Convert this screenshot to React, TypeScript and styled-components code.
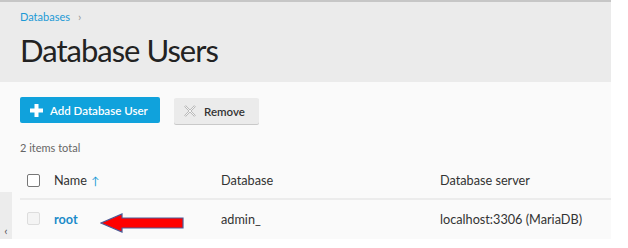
import styled, { createGlobalStyle } from "styled-components";

const GlobalStyle = createGlobalStyle`
    html, body {
        margin: 0;
        padding: 0;
        background: #ffffff;
    }
    body {
        font-family: Lato, "Open Sans", sans-serif;
        color: #333333;
    }
`

const Page = styled.div`
    width: 611px;
    border-top: 2px solid #c6c6c6;
    position: relative;
`

const Header = styled.div`
    background: #ebebeb;
    padding: 7px 20px 0;
    height: 73px;
`

const Breadcrumb = styled.div`
    display: flex;
    align-items: center;
    gap: 8px;
    font-size: 11px;
    line-height: 16px;
    color: #1c9ad6;
`

const Chevron = styled.span`
    color: #9a9a9a;
    font-size: 12px;
`

const Title = styled.h1`
    margin: 2px 0 0;
    font-size: 31px;
    font-weight: 400;
    line-height: 46px;
    color: #222222;
    letter-spacing: -1px;
`

const Body = styled.div`
    background: #fafafa;
    padding: 15px 0 0 20px;
    height: 142px;
`

const Toolbar = styled.div`
    display: flex;
    gap: 14px;
`

const Button = styled.button<{ $primary?: boolean }>`
    display: flex;
    align-items: center;
    gap: ${p => p.$primary ? "7px" : "8px"};
    height: 26px;
    width: ${p => p.$primary ? "140px" : "85px"};
    padding: 0 0 0 ${p => p.$primary ? "10px" : "10px"};
    border: none;
    border-radius: 2px;
    white-space: nowrap;
    font-family: Lato, "Open Sans", sans-serif;
    font-size: 11.5px;
    font-weight: 600;
    background: ${p => p.$primary ? "#10a2dc" : "#ebebeb"};
    color: ${p => p.$primary ? "#ffffff" : "#333333"};
    box-shadow: ${p => p.$primary ? "none" : "0 1px 0 #c9c9c9"};
    margin-top: ${p => p.$primary ? "0" : "1px"};
`

const Total = styled.div`
    margin-top: 16px;
    font-size: 11px;
    line-height: 16px;
    color: #666666;
`

const Table = styled.div`
    margin-top: 6px;
    display: grid;
    grid-template-columns: 34px 167px 219px 1fr;
`

const HeadCell = styled.div`
    height: 36px;
    display: flex;
    align-items: center;
    font-size: 12.7px;
    color: #333333;
    border-bottom: 2px solid #ececec;
`

const Cell = styled.div`
    height: 37px;
    display: flex;
    align-items: center;
    font-size: 12.7px;
    color: #333333;
`

const Checkbox = styled.span<{ $muted?: boolean }>`
    display: block;
    width: 11px;
    height: 11px;
    margin-left: 7px;
    border: 1px solid ${p => p.$muted ? "#dddddd" : "#777777"};
    border-radius: 2px;
    background: ${p => p.$muted ? "#f4f4f4" : "#ffffff"};
`

const SortArrow = styled.span`
    color: #1c9ad6;
    font-size: 11px;
    margin-left: 4px;
`

const NameLink = styled.a`
    color: #1a8bc9;
    font-weight: 700;
    text-decoration: none;
`

const Pointer = styled.svg`
    position: absolute;
    left: 100px;
    top: 208px;
`

const SideToggle = styled.div`
    position: absolute;
    left: 0;
    top: 190px;
    width: 12px;
    height: 49px;
    background: #ececec;
    display: flex;
    align-items: flex-end;
    justify-content: center;
    font-size: 12px;
    color: #555555;
    line-height: 20px;
`

export default function App() {
    return (
        <>
            <GlobalStyle />
            <Page>
                <Header>
                    <Breadcrumb>
                        <span>Databases</span>
                        <Chevron>&#x203A;</Chevron>
                    </Breadcrumb>
                    <Title>Database Users</Title>
                </Header>
                <Body>
                    <Toolbar>
                        <Button $primary>
                            <svg width="13" height="13" viewBox="0 0 13 13">
                                <path d="M4.5 0h4v4.5H13v4H8.5V13h-4V8.5H0v-4h4.5z" fill="#ffffff" />
                            </svg>
                            Add Database User
                        </Button>
                        <Button>
                            <svg width="12" height="12" viewBox="0 0 14 14">
                                <path d="M2 0.8L7 5.8L12 0.8L13.2 2L8.2 7L13.2 12L12 13.2L7 8.2L2 13.2L0.8 12L5.8 7L0.8 2Z" fill="#f4f4f4" stroke="#b0b0b0" strokeWidth="1" strokeLinejoin="round" />
                            </svg>
                            Remove
                        </Button>
                    </Toolbar>
                    <Total>2 items total</Total>
                    <Table>
                        <HeadCell><Checkbox /></HeadCell>
                        <HeadCell>Name<SortArrow>&#x2191;</SortArrow></HeadCell>
                        <HeadCell>Database</HeadCell>
                        <HeadCell>Database server</HeadCell>
                        <Cell><Checkbox $muted /></Cell>
                        <Cell><NameLink href="#">root</NameLink></Cell>
                        <Cell>admin_</Cell>
                        <Cell>localhost:3306 (MariaDB)</Cell>
                    </Table>
                </Body>
                <SideToggle>&#x2039;</SideToggle>
                <Pointer width="86" height="26" viewBox="0 0 86 26">
                    <path d="M1 13L22 4V8H83V18H22V22Z" fill="#ff0000" stroke="#4b5a96" strokeWidth="1.2" strokeLinejoin="miter" />
                </Pointer>
            </Page>
        </>
    );
}
